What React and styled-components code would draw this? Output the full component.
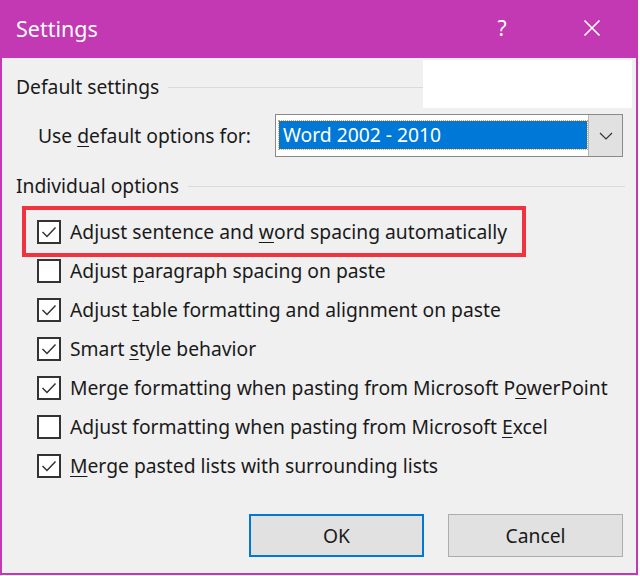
import React from 'react';
import styled, { createGlobalStyle } from 'styled-components';

const GlobalStyle = createGlobalStyle`
  html, body {
    margin: 0;
    padding: 0;
    background: #ffffff;
  }
  body {
    font-family: "Noto Sans", "Open Sans", sans-serif;
    color: #1a1a1a;
  }
`;

const options = [
  { pre: 'Adjust sentence and ', key: 'w', post: 'ord spacing automatically', checked: true, marked: true },
  { pre: 'Adjust ', key: 'p', post: 'aragraph spacing on paste', checked: false },
  { pre: 'Adjust ', key: 't', post: 'able formatting and alignment on paste', checked: true },
  { pre: 'Smart ', key: 's', post: 'tyle behavior', checked: true },
  { pre: 'Merge formatting when pasting from Microsoft P', key: 'o', post: 'werPoint', checked: true },
  { pre: 'Adjust formatting when pasting from Microsoft ', key: 'E', post: 'xcel', checked: false },
  { pre: '', key: 'M', post: 'erge pasted lists with surrounding lists', checked: true },
];

function Settings() {
  return (
    <>
      <GlobalStyle />
      <Window>
        <TitleBar>
          <Title>Settings</Title>
          <TitleButtons>
            <Help>?</Help>
            <Close aria-label="Close">
              <svg width="18" height="18" viewBox="0 0 18 18">
                <path d="M1.5 1.5 L16.5 16.5 M16.5 1.5 L1.5 16.5" stroke="#ffffff" strokeWidth="1.6" fill="none" />
              </svg>
            </Close>
          </TitleButtons>
        </TitleBar>

        <Body>
          <TopHead>
            <HeadMain>
              <Legend>Default settings</Legend>
              <Rule />
            </HeadMain>
            <Patch />
          </TopHead>

          <DefaultRow>
            <Text>
              Use <u>d</u>efault options for:
            </Text>
            <Combo>
              <ComboValue>Word 2002 - 2010</ComboValue>
              <ComboButton>
                <svg width="14" height="8" viewBox="0 0 14 8">
                  <path d="M1 1 L7 7 L13 1" stroke="#333333" strokeWidth="1.2" fill="none" />
                </svg>
              </ComboButton>
            </Combo>
          </DefaultRow>

          <GroupHead>
            <Legend>Individual options</Legend>
            <Rule />
          </GroupHead>

          <OptionList>
            {options.map((o, i) => (
              <OptionRow key={i} $marked={o.marked}>
                <Check>
                  {o.checked && (
                    <svg width="20" height="20" viewBox="0 0 20 20">
                      <path d="M3.5 10 L8 14.5 L16.5 5.5" stroke="#333333" strokeWidth="1.5" fill="none" />
                    </svg>
                  )}
                </Check>
                <Text>
                  {o.pre}
                  <u>{o.key}</u>
                  {o.post}
                </Text>
              </OptionRow>
            ))}
          </OptionList>

          <Footer>
            <Button $primary>OK</Button>
            <Button>Cancel</Button>
          </Footer>
        </Body>
      </Window>
    </>
  );
}

const Window = styled.div`
  width: 638px;
  height: 575px;
  box-sizing: border-box;
  border: 2px solid #c239b3;
  border-top: none;
  background: #f0f0f0;
  display: flex;
  flex-direction: column;
`;

const TitleBar = styled.div`
  height: 58px;
  margin: 0 -2px;
  background: #c239b3;
  display: flex;
  align-items: center;
  padding: 0 0 0 16px;
  color: #ffffff;
`;

const Title = styled.div`
  font-size: 21.5px;
  flex: 1;
  margin-top: -2px;
`;

const TitleButtons = styled.div`
  display: flex;
  align-items: center;
  height: 100%;
`;

const Help = styled.div`
  width: 46px;
  font-size: 21px;
  text-align: center;
  margin-right: 37px;
  margin-top: -2px;
`;

const Close = styled.div`
  width: 60px;
  display: flex;
  justify-content: center;
  margin-right: 16px;
  margin-top: -2px;
`;

const Body = styled.div`
  flex: 1;
  display: flex;
  flex-direction: column;
  padding-top: 2px;
`;

const TopHead = styled.div`
  display: flex;
  height: 48px;
`;

const HeadMain = styled.div`
  flex: 1;
  display: flex;
  align-items: center;
  padding: 6px 0 0 14px;
`;

const Legend = styled.div`
  font-size: 19.3px;
  line-height: 24px;
  color: #1a1a1a;
`;

const Rule = styled.div`
  flex: 1;
  height: 1px;
  background: #dadada;
  margin-left: 9px;
`;

const Patch = styled.div`
  width: 209px;
  background: #ffffff;
  margin-right: 4px;
`;

const DefaultRow = styled.div`
  display: flex;
  align-items: center;
  margin-top: 6px;
  height: 43px;
  padding-left: 36px;
  padding-right: 13px;
`;

const Text = styled.span`
  font-size: 19.3px;
  line-height: 24px;
  white-space: nowrap;
  color: #1a1a1a;

  u {
    text-underline-offset: 3px;
  }
`;

const Combo = styled.div`
  margin-left: auto;
  width: 348px;
  height: 43px;
  box-sizing: border-box;
  border: 1px solid #8a8a8a;
  background: #ffffff;
  display: flex;
`;

const ComboValue = styled.div`
  flex: 1;
  margin: 6px 1px 7px 3px;
  background: #0078d7;
  outline: 1px dotted #e9a23b;
  color: #ffffff;
  font-size: 19.3px;
  line-height: 28px;
  padding-left: 4px;
`;

const ComboButton = styled.div`
  width: 33px;
  background: #e1e1e1;
  border-left: 1px solid #b8b8b8;
  display: flex;
  align-items: center;
  justify-content: center;
`;

const GroupHead = styled.div`
  display: flex;
  align-items: center;
  margin-top: 17px;
  padding: 0 11px 0 14px;
`;

const OptionList = styled.div`
  display: flex;
  flex-direction: column;
  align-items: flex-start;
  padding-left: 35px;
  margin-top: 14px;
`;

const OptionRow = styled.div`
  position: relative;
  display: flex;
  align-items: center;
  height: 39px;
  gap: 9px;

  ${(p) =>
    p.$marked &&
    `
    &::after {
      content: '';
      position: absolute;
      left: -15px;
      right: -19px;
      top: -6px;
      bottom: -6px;
      border: 4px solid #f0333f;
      pointer-events: none;
    }
  `}
`;

const Check = styled.div`
  width: 24px;
  height: 24px;
  box-sizing: border-box;
  border: 2px solid #333333;
  background: #ffffff;
  display: flex;
  align-items: center;
  justify-content: center;
`;

const Footer = styled.div`
  margin-top: auto;
  display: flex;
  justify-content: flex-end;
  gap: 24px;
  padding: 0 13px 16px 0;
`;

const Button = styled.div`
  width: 175px;
  height: 43px;
  box-sizing: border-box;
  border: ${(p) => (p.$primary ? '2px solid #0078d7' : '1px solid #adadad')};
  background: #e1e1e1;
  display: flex;
  align-items: center;
  justify-content: center;
  font-size: 19.3px;
  color: #1a1a1a;
`;

export default Settings;
